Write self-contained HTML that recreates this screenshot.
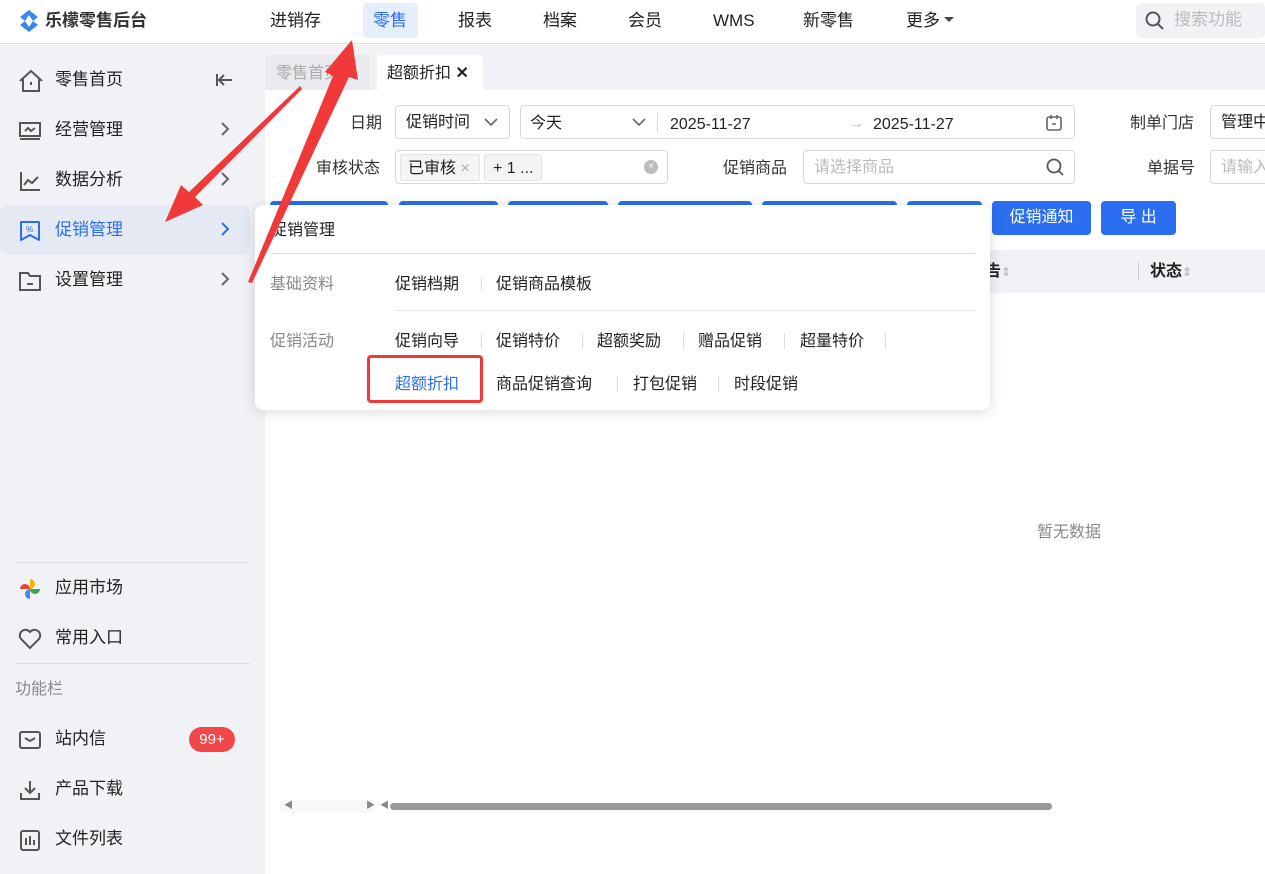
<!DOCTYPE html>
<html><head><meta charset="utf-8"><style>
*{margin:0;padding:0;box-sizing:border-box}
body{width:1265px;height:874px;overflow:hidden;font-family:"Liberation Sans","Noto Sans CJK SC",sans-serif;font-size:16px;line-height:1.32;color:#222;background:#fff;position:relative;white-space:nowrap}
.abs{position:absolute}
.hdr{left:0;top:0;width:1265px;height:44px;background:#fff;border-bottom:1px solid #ddd}
.nav{top:10px;font-size:17px;color:#222}
.side{left:0;top:45px;width:265px;height:829px;background:#f0f2f5}
.mi{position:absolute;left:55px;font-size:17px;color:#222}
.ico{position:absolute;left:18px}
.inp{position:absolute;border:1px solid #d9d9d9;border-radius:4px;background:#fff;height:34px}
.lbl{position:absolute;font-size:16px;color:#333}
.btn{position:absolute;top:201px;height:34px;background:#2b6ff0;border-radius:4px;color:#fff;font-size:16px;line-height:34px;text-align:center}
.pi{position:absolute;font-size:16px;color:#222}
.sep{position:absolute;width:1px;height:16px;background:#ddd}
</style></head><body>
<div class="abs hdr"></div>
<svg class="abs" style="left:18px;top:9px" width="22" height="24" viewBox="0 0 22 24"><path d="M11 1 L20 8 L15 12 L20 16 L11 23 L2 16 L7 12 L2 8Z" fill="#3a86f5"/><path d="M11 6 L15 12 L11 18 L7 12Z" fill="#fff"/></svg>
<div class="abs" style="left:45px;top:10px;font-size:17px;font-weight:bold;color:#333">乐檬零售后台</div>
<div class="abs nav" style="left:270px">进销存</div>
<div class="abs" style="left:363px;top:3px;width:55px;height:35px;background:#e6eefc;border-radius:4px"></div>
<div class="abs nav" style="left:373px;color:#2b6ff0">零售</div>
<div class="abs nav" style="left:458px">报表</div>
<div class="abs nav" style="left:543px">档案</div>
<div class="abs nav" style="left:628px">会员</div>
<div class="abs nav" style="left:713px;top:10px">WMS</div>
<div class="abs nav" style="left:803px">新零售</div>
<div class="abs nav" style="left:906px">更多</div>
<svg class="abs" style="left:943px;top:16px" width="12" height="8"><path d="M1 1 H11 L6 6Z" fill="#444"/></svg>
<div class="abs" style="left:1136px;top:3px;width:129px;height:35px;background:#f0f2f5;border-radius:5px"></div>
<svg class="abs" style="left:1145px;top:11px" width="20" height="20"><circle cx="8" cy="8" r="6.5" stroke="#555" stroke-width="2" fill="none"/><path d="M13 13 L18 18" stroke="#555" stroke-width="2"/></svg>
<div class="abs" style="left:1174px;top:9px;font-size:17px;color:#bbb">搜索功能</div>

<div class="abs side"></div>
<div class="abs" style="left:0;top:205px;width:250px;height:50px;background:#e4e9f4;border-radius:8px"></div>
<svg class="ico" style="top:69px" width="26" height="24"><path d="M2 12 L13 2 L24 12 M5 10 V22 H21 V10 M13 13 V16" stroke="#555" stroke-width="2" fill="none"/></svg>
<div class="mi" style="top:69px">零售首页</div>
<svg class="abs" style="left:216px;top:72px" width="18" height="16"><path d="M16 8 H3 M8 3 L3 8 L8 13 M1 2 V14" stroke="#555" stroke-width="2" fill="none"/></svg>
<svg class="ico" style="top:121px" width="24" height="20"><rect x="2" y="2" width="20" height="13" stroke="#555" stroke-width="2" fill="none"/><path d="M2 18 H22 M7 10 L10 7 L13 10 L17 7" stroke="#555" stroke-width="2" fill="none"/></svg>
<div class="mi" style="top:119px">经营管理</div>
<svg class="abs" style="left:219px;top:121px" width="12" height="16"><path d="M3 2 L9 8 L3 14" stroke="#666" stroke-width="2" fill="none"/></svg>
<svg class="ico" style="top:170px" width="24" height="22"><path d="M3 2 V20 H22 M6 15 L10 10 L14 13 L20 7" stroke="#555" stroke-width="2" fill="none"/></svg>
<div class="mi" style="top:169px">数据分析</div>
<svg class="abs" style="left:219px;top:171px" width="12" height="16"><path d="M3 2 L9 8 L3 14" stroke="#666" stroke-width="2" fill="none"/></svg>
<svg class="ico" style="top:219px" width="24" height="24"><path d="M3 3 H21 V21 L12 16 L3 21Z" stroke="#2b6ff0" stroke-width="2" fill="none" stroke-linejoin="round"/><text x="8" y="13" font-size="8" fill="#2b6ff0">%</text></svg>
<div class="mi" style="top:219px;color:#2b6ff0">促销管理</div>
<svg class="abs" style="left:219px;top:221px" width="12" height="16"><path d="M3 2 L9 8 L3 14" stroke="#2b6ff0" stroke-width="2" fill="none"/></svg>
<svg class="ico" style="top:270px" width="24" height="22"><path d="M2 3 H10 L12 6 H22 V20 H2Z M9 14 H15" stroke="#555" stroke-width="2" fill="none"/></svg>
<div class="mi" style="top:269px">设置管理</div>
<svg class="abs" style="left:219px;top:271px" width="12" height="16"><path d="M3 2 L9 8 L3 14" stroke="#666" stroke-width="2" fill="none"/></svg>
<div class="abs" style="left:15px;top:562px;width:235px;height:1px;background:#ddd"></div>
<svg class="ico" style="top:577px" width="24" height="24"><path d="M12 12 V2 A5 5 0 0 1 12 12" fill="#f5b400"/><path d="M12 12 H22 A5 5 0 0 1 12 12" fill="#34a853"/><path d="M12 12 V22 A5 5 0 0 1 12 12" fill="#4285f4"/><path d="M12 12 H2 A5 5 0 0 1 12 12" fill="#ea4335"/></svg>
<div class="mi" style="top:577px">应用市场</div>
<svg class="ico" style="top:628px" width="24" height="22"><path d="M12 20 L3 11 A5 5 0 0 1 12 4 A5 5 0 0 1 21 11Z" stroke="#555" stroke-width="2" fill="none"/></svg>
<div class="mi" style="top:627px">常用入口</div>
<div class="abs" style="left:15px;top:663px;width:235px;height:1px;background:#ddd"></div>
<div class="abs" style="left:15px;top:679px;font-size:16px;color:#888">功能栏</div>
<svg class="ico" style="top:730px" width="24" height="20"><rect x="2" y="2" width="20" height="16" rx="2" stroke="#555" stroke-width="2" fill="none"/><path d="M7 8 L12 11 L17 8" stroke="#555" stroke-width="2" fill="none"/></svg>
<div class="mi" style="top:728px">站内信</div>
<div class="abs" style="left:189px;top:727px;width:46px;height:25px;background:#f04848;border-radius:13px;color:#fff;font-size:15px;text-align:center;line-height:25px">99+</div>
<svg class="ico" style="top:779px" width="24" height="22"><path d="M12 2 V14 M7 9 L12 14 L17 9 M3 14 V20 H21 V14" stroke="#555" stroke-width="2" fill="none"/></svg>
<div class="mi" style="top:778px">产品下载</div>
<svg class="ico" style="top:829px" width="24" height="22"><rect x="3" y="2" width="18" height="19" rx="2" stroke="#555" stroke-width="2" fill="none"/><path d="M8 9 V16 M12 7 V16 M16 11 V16" stroke="#555" stroke-width="2"/></svg>
<div class="mi" style="top:828px">文件列表</div>

<div class="abs" style="left:265px;top:45px;width:1000px;height:45px;background:#f0f2f5"></div>
<div class="abs" style="left:266px;top:55px;width:104px;height:35px;background:#e8eaee;border-radius:4px 4px 0 0;color:#aaa;padding:8px 10px">零售首页 ×</div>
<div class="abs" style="left:377px;top:55px;width:106px;height:35px;background:#fff;border-radius:4px 4px 0 0;padding:8px 10px">超额折扣 <b>✕</b></div>

<div class="lbl" style="left:350px;top:113px">日期</div>
<div class="inp" style="left:395px;top:105px;width:115px;padding:6px 10px">促销时间</div>
<svg class="abs" style="left:484px;top:117px" width="14" height="10"><path d="M1 2 L7 8 L13 2" stroke="#666" stroke-width="1.6" fill="none"/></svg>
<div class="inp" style="left:520px;top:105px;width:555px"></div>
<div class="abs" style="left:530px;top:113px">今天</div>
<svg class="abs" style="left:632px;top:117px" width="14" height="10"><path d="M1 2 L7 8 L13 2" stroke="#666" stroke-width="1.6" fill="none"/></svg>
<div class="abs" style="left:657px;top:113px;width:1px;height:20px;background:#ddd"></div>
<div class="abs" style="left:670px;top:114px">2025-11-27</div>
<div class="abs" style="left:848px;top:113px;color:#bbb">→</div>
<div class="abs" style="left:873px;top:114px">2025-11-27</div>
<svg class="abs" style="left:1045px;top:114px" width="18" height="18"><rect x="2" y="3" width="14" height="13" rx="2" stroke="#666" stroke-width="1.6" fill="none"/><path d="M6 1 V5 M12 1 V5 M7 10 H11" stroke="#666" stroke-width="1.6"/></svg>
<div class="lbl" style="left:1130px;top:113px">制单门店</div>
<div class="inp" style="left:1210px;top:105px;width:70px;padding:6px 10px">管理中</div>

<div class="lbl" style="left:316px;top:158px">审核状态</div>
<div class="inp" style="left:395px;top:150px;width:273px"></div>
<div class="abs" style="left:400px;top:154px;width:80px;height:27px;background:#f4f4f5;border:1px solid #e3e3e3;border-radius:3px;padding:3px 7px">已审核 <span style="color:#aaa">×</span></div>
<div class="abs" style="left:484px;top:154px;width:58px;height:27px;background:#f4f4f5;border:1px solid #e3e3e3;border-radius:3px;padding:3px 8px">+ 1 ...</div>
<div class="abs" style="left:644px;top:160px;width:14px;height:14px;border-radius:7px;background:#bbb;color:#fff;font-size:10px;text-align:center;line-height:14px">×</div>
<div class="lbl" style="left:723px;top:158px">促销商品</div>
<div class="inp" style="left:803px;top:150px;width:272px;padding:6px 10px;color:#bbb">请选择商品</div>
<svg class="abs" style="left:1046px;top:158px" width="20" height="20"><circle cx="8" cy="8" r="6.5" stroke="#555" stroke-width="1.8" fill="none"/><path d="M13 13 L17 17" stroke="#555" stroke-width="1.8"/></svg>
<div class="lbl" style="left:1147px;top:158px">单据号</div>
<div class="inp" style="left:1210px;top:150px;width:70px;padding:6px 10px;color:#bbb">请输入</div>

<div class="btn" style="left:270px;width:118px"></div>
<div class="btn" style="left:399px;width:99px"></div>
<div class="btn" style="left:508px;width:100px"></div>
<div class="btn" style="left:618px;width:134px"></div>
<div class="btn" style="left:762px;width:135px"></div>
<div class="btn" style="left:907px;width:75px"></div>
<div class="btn" style="left:992px;width:99px">促销通知</div>
<div class="btn" style="left:1101px;width:75px">导 出</div>

<div class="abs" style="left:265px;top:250px;width:1000px;height:43px;background:#f0f2f5"></div>
<div class="abs" style="left:985px;top:261px;font-weight:bold">告<span style="color:#aaa;font-weight:normal;font-size:12px">⇕</span></div>
<div class="abs" style="left:1138px;top:262px;width:1px;height:18px;background:#ccc"></div>
<div class="abs" style="left:1150px;top:261px;font-weight:bold">状态<span style="color:#aaa;font-weight:normal;font-size:12px">⇕</span></div>
<div class="abs" style="left:1037px;top:522px;color:#888">暂无数据</div>

<div class="abs" style="left:280px;top:800px;width:95px;height:13px;background:#f8f8f8"></div>
<div class="abs" style="left:284px;top:800px;font-size:9px;color:#888">◀</div>
<div class="abs" style="left:366px;top:800px;font-size:9px;color:#888">▶</div>
<div class="abs" style="left:380px;top:800px;font-size:9px;color:#888">◀</div>
<div class="abs" style="left:390px;top:803px;width:662px;height:7px;background:#999;border-radius:4px"></div>

<div class="abs" style="left:255px;top:205px;width:735px;height:205px;background:#fff;border-radius:8px;box-shadow:0 2px 14px rgba(0,0,0,.15)"></div>
<div class="pi" style="left:271px;top:220px">促销管理</div>
<div class="abs" style="left:271px;top:253px;width:704px;height:1px;background:#ddd"></div>
<div class="pi" style="left:270px;top:274px;color:#888">基础资料</div>
<div class="pi" style="left:395px;top:274px">促销档期</div><div class="sep" style="left:481px;top:276px"></div>
<div class="pi" style="left:496px;top:274px">促销商品模板</div>
<div class="abs" style="left:395px;top:310px;width:580px;height:1px;background:#e5e5e5"></div>
<div class="pi" style="left:270px;top:331px;color:#888">促销活动</div>
<div class="pi" style="left:395px;top:331px">促销向导</div><div class="sep" style="left:481px;top:333px"></div>
<div class="pi" style="left:496px;top:331px">促销特价</div><div class="sep" style="left:582px;top:333px"></div>
<div class="pi" style="left:597px;top:331px">超额奖励</div><div class="sep" style="left:683px;top:333px"></div>
<div class="pi" style="left:698px;top:331px">赠品促销</div><div class="sep" style="left:784px;top:333px"></div>
<div class="pi" style="left:800px;top:331px">超量特价</div><div class="sep" style="left:885px;top:333px"></div>
<div class="abs" style="left:367px;top:355px;width:116px;height:48px;border:3px solid #f03a3a;border-radius:4px"></div>
<div class="pi" style="left:395px;top:374px;color:#2b6ff0">超额折扣</div>
<div class="pi" style="left:496px;top:374px">商品促销查询</div><div class="sep" style="left:617px;top:376px"></div>
<div class="pi" style="left:633px;top:374px">打包促销</div><div class="sep" style="left:718px;top:376px"></div>
<div class="pi" style="left:734px;top:374px">时段促销</div>

<svg class="abs" style="left:0;top:0" width="1265" height="874">
<polygon points="248,282 333,76 325,72 352,40 358,80 349,77 252,283" fill="#f03a3a"/>
<polygon points="300,86 302,89 195,197 203,205 165,222 181,185 189,192" fill="#f03a3a"/>
</svg>
</body></html>
